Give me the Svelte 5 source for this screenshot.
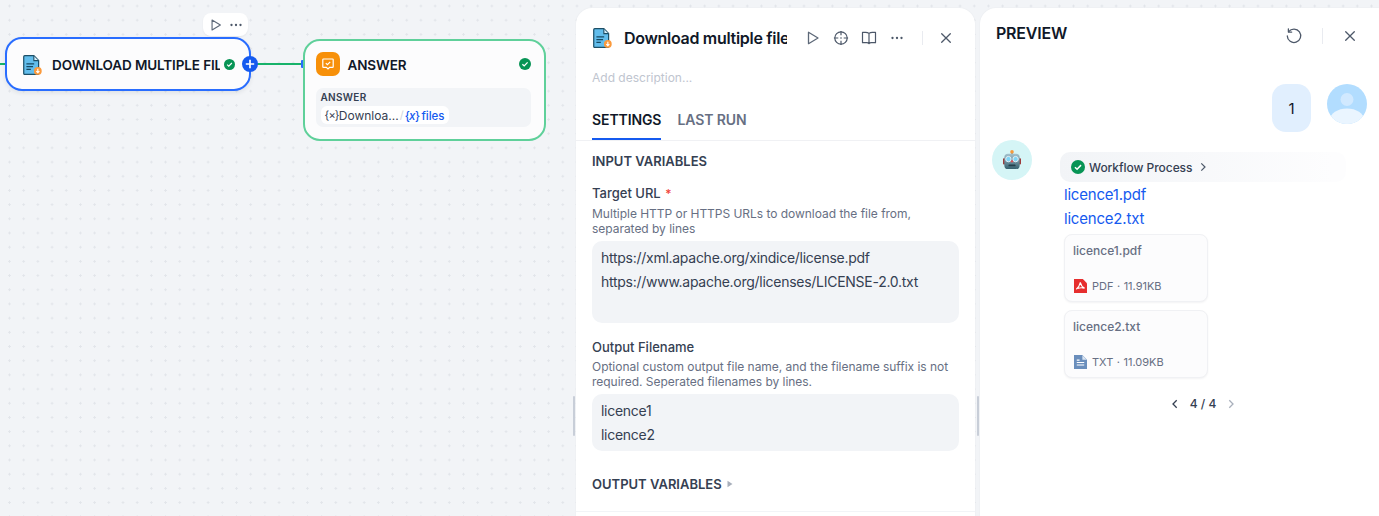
<script lang="ts">
  const urls = [
    "https://xml.apache.org/xindice/license.pdf",
    "https://www.apache.org/licenses/LICENSE-2.0.txt",
  ];
  const names = ["licence1", "licence2"];
  const links = ["licence1.pdf", "licence2.txt"];
</script>

{#snippet docIcon()}
  <svg class="doc" width="19" height="20" viewBox="2 1 17 18" aria-hidden="true">
    <path d="M3.500 1.600h8.200l4.300 4.400v11.600c0 .5-.4.900-.9.900H3.500c-.5 0-.9-.4-.9-.9V2.500c0-.5.400-.9.900-.9z" fill="#62bdec" stroke="#1d4f66" stroke-width="1.100"/>
    <path d="M11.700 1.800v4.300H16" fill="#d6eefa" stroke="#1d4f66" stroke-width="1"/>
    <path d="M5 9h7M5 11.500h6M5 14h4" stroke="#164a63" stroke-width="1.200"/>
    <circle cx="15.300" cy="15.300" r="3.500" fill="#fb9a3c"/>
    <path d="M15.300 13.300v3.400M13.900 15.500l1.400 1.400 1.400-1.400" fill="none" stroke="#fff" stroke-width="1"/>
  </svg>
{/snippet}

{#snippet check(size)}
  <svg width={size} height={size} viewBox="0 0 12 12" aria-hidden="true">
    <circle cx="6" cy="6" r="6" fill="#079455"/>
    <path d="M3.400 6.200l1.800 1.700 3.400-3.500" fill="none" stroke="#fff" stroke-width="1.300"/>
  </svg>
{/snippet}

{#snippet close()}
  <svg width="16" height="16" viewBox="0 0 16 16" aria-hidden="true">
    <path d="M3.700 3.700l8.600 8.600M12.300 3.700l-8.600 8.600" stroke="#4d5869" stroke-width="1.300" stroke-linecap="round"/>
  </svg>
{/snippet}

{#snippet play(size)}
  <svg width={size} height={size} viewBox="0 0 16 16" aria-hidden="true">
    <path d="M3.500 2.300v11.400L13 8z" fill="none" stroke="#5d6878" stroke-width="1.300" stroke-linejoin="round"/>
  </svg>
{/snippet}

{#snippet dots()}
  <svg width="16" height="16" viewBox="0 0 16 16" aria-hidden="true">
    <g fill="#4d5869"><circle cx="3.500" cy="8" r="1.150"/><circle cx="8" cy="8" r="1.150"/><circle cx="12.500" cy="8" r="1.150"/></g>
  </svg>
{/snippet}

<div class="screen">
  <section class="canvas">
    <div class="edge edge-in"></div>
    <div class="edge edge-out"></div>
    <div class="port"></div>

    <div class="node-tools">
      {@render play(14)}
      {@render dots()}
    </div>

    <div class="node node-download">
      {@render docIcon()}
      <span class="node-title clip">DOWNLOAD MULTIPLE FILES</span>
      {@render check(11)}
      <span class="add">
        <svg width="10" height="10" viewBox="0 0 10 10" aria-hidden="true"><path d="M5 .8v8.400M.8 5h8.400" stroke="#fff" stroke-width="1.700"/></svg>
      </span>
    </div>

    <div class="node node-answer">
      <div class="answer-head">
        <span class="answer-icon">
          <svg width="14" height="14" viewBox="0 0 14 14" aria-hidden="true">
            <path d="M2.500 2h9c.4 0 .7.300.7.700v7c0 .4-.3.700-.7.700H8.600L7 12 5.400 10.400H2.500c-.4 0-.7-.3-.7-.7v-7c0-.4.300-.7.700-.7z" fill="none" stroke="#fff" stroke-width="1.200"/>
            <path d="M4.800 6.100l1.600 1.500 2.800-2.800" fill="none" stroke="#fff" stroke-width="1.200"/>
          </svg>
        </span>
        <span class="node-title">ANSWER</span>
        {@render check(12)}
      </div>
      <div class="answer-body">
        <div class="answer-label">ANSWER</div>
        <div class="var-chip">
          <span class="var-x">{"{×}"}</span><span>Downloa...</span><span class="var-sep">/</span><span class="var-blue"><span class="var-brace">{"{"}<i>x</i>{"}"}</span><span class="var-name">files</span></span>
        </div>
      </div>
    </div>
  </section>

  <div class="handle"></div>

  <section class="panel">
    <header class="panel-head">
      {@render docIcon()}
      <h2 class="panel-title">Download multiple files</h2>
      <div class="head-tools">
        <span class="tool">{@render play(16)}</span>
        <span class="tool">
          <svg width="16" height="16" viewBox="0 0 16 16" aria-hidden="true">
            <circle cx="8" cy="8" r="6.200" fill="none" stroke="#4d5869" stroke-width="1.200"/>
            <path d="M8 .9v4.400M8 10.700v4.400M.9 8h4.400M10.700 8h4.400" stroke="#4d5869" stroke-width="1.200"/>
            <circle cx="8" cy="8" r=".8" fill="#4d5869"/>
          </svg>
        </span>
        <span class="tool">
          <svg width="16" height="16" viewBox="0 0 16 16" aria-hidden="true">
            <path d="M8 3.400C7 2.600 6 2.300 4.600 2.300H1.500v10.400h4.300c1 0 1.700.4 2.200 1 .5-.6 1.200-1 2.200-1h4.300V2.300h-3.100C10 2.300 9 2.600 8 3.400zM8 3.400v10.300" fill="none" stroke="#4d5869" stroke-width="1.200" stroke-linejoin="round"/>
          </svg>
        </span>
        <span class="tool">{@render dots()}</span>
        <span class="head-divider"></span>
        <span class="tool">{@render close()}</span>
      </div>
    </header>

    <p class="add-desc">Add description...</p>

    <nav class="tabs">
      <span class="tab active">SETTINGS</span>
      <span class="tab">LAST RUN</span>
    </nav>

    <div class="panel-body">
      <h3 class="section-title">INPUT VARIABLES</h3>

      <div class="field">
        <div class="field-label">Target URL <span class="req">*</span></div>
        <p class="field-desc">Multiple HTTP or HTTPS URLs to download the file from, separated by lines</p>
        <div class="input input-urls">
          {#each urls as url}
            <div>{url}</div>
          {/each}
        </div>
      </div>

      <div class="field">
        <div class="field-label">Output Filename</div>
        <p class="field-desc">Optional custom output file name, and the filename suffix is not required. Seperated filenames by lines.</p>
        <div class="input">
          {#each names as name}
            <div>{name}</div>
          {/each}
        </div>
      </div>

      <h3 class="section-title output">
        OUTPUT VARIABLES
        <svg width="6" height="8" viewBox="0 0 6 8" aria-hidden="true"><path d="M.5.800L5.500 4 .5 7.200z" fill="#a8afbb"/></svg>
      </h3>
    </div>
    <div class="panel-rule"></div>
  </section>

  <div class="handle"></div>

  <section class="preview">
    <header class="preview-head">
      <h2 class="preview-title">PREVIEW</h2>
      <div class="preview-tools">
        <svg width="18" height="18" viewBox="0 0 18 18" aria-hidden="true">
          <path d="M3.700 4.700A6.700 6.700 0 1 1 2.300 9" fill="none" stroke="#4d5869" stroke-width="1.300" stroke-linecap="round"/>
          <path d="M3.400 1.800v3.300h3.300" fill="none" stroke="#4d5869" stroke-width="1.300" stroke-linecap="round" stroke-linejoin="round"/>
        </svg>
        <span class="head-divider"></span>
        {@render close()}
      </div>
    </header>

    <div class="msg-user">
      <div class="bubble">1</div>
      <svg class="avatar" width="40" height="40" viewBox="0 0 40 40" aria-hidden="true">
        <defs><clipPath id="round"><circle cx="20" cy="20" r="20"/></clipPath></defs>
        <g clip-path="url(#round)">
          <rect width="40" height="40" fill="#b2ddff"/>
          <circle cx="20" cy="15.500" r="6.500" fill="#d1e9ff"/>
          <ellipse cx="20" cy="36" rx="17" ry="11.500" fill="#eaf5ff"/>
        </g>
      </svg>
    </div>

    <div class="msg-bot">
      <span class="bot-avatar">
        <svg width="18" height="20" viewBox="0 0 20 22" aria-hidden="true">
          <defs>
            <linearGradient id="face" x1="0" y1="0" x2="0" y2="1">
              <stop offset="0" stop-color="#a5c3cf"/>
              <stop offset="1" stop-color="#35616f"/>
            </linearGradient>
          </defs>
          <rect x="9" y="2" width="2" height="3" fill="#7d8a96"/>
          <circle cx="10" cy="2" r="2" fill="#f79a3b"/>
          <rect x="0" y="9" width="3" height="7" rx="1" fill="#9c3b3b"/>
          <rect x="17" y="9" width="3" height="7" rx="1" fill="#9c3b3b"/>
          <rect x="1.500" y="4" width="17" height="17" rx="4" fill="url(#face)"/>
          <circle cx="6" cy="10" r="3" fill="#7fd4f5" stroke="#eef5f8" stroke-width="1"/>
          <circle cx="14" cy="10" r="3" fill="#7fd4f5" stroke="#eef5f8" stroke-width="1"/>
          <path d="M10 10.500l1.600 3H8.400z" fill="#e5484d"/>
          <rect x="6" y="16" width="8" height="2" rx="1" fill="#23404c"/>
        </svg>
      </span>
      <div class="bot-content">
        <div class="process">
          {@render check(14)}
          <span>Workflow Process</span>
          <svg width="12" height="12" viewBox="0 0 12 12" aria-hidden="true"><path d="M4.300 2.300L8 6 4.300 9.700" fill="none" stroke="#4d5869" stroke-width="1.200"/></svg>
        </div>
        <div class="links">
          {#each links as link}
            <span class="link">{link}</span>
          {/each}
        </div>
        <div class="file-card">
          <span class="file-name">licence1.pdf</span>
          <div class="file-meta">
            <svg width="13" height="14" viewBox="0 0 14 15" aria-hidden="true">
              <path d="M0 0h9.500L14 4.500V15H0z" fill="#e62e2e"/>
              <path d="M6.800 3.500c-.5 2.500-2 5.500-4.300 7.500M6.800 3.500c.5 2.500 2 5 4.700 6.500M4 10.200c2-.8 4.500-1 7-.4" fill="none" stroke="#fff" stroke-width="1.200"/>
            </svg>
            <span>PDF</span><span class="dot">·</span><span>11.91KB</span>
          </div>
        </div>
        <div class="file-card">
          <span class="file-name">licence2.txt</span>
          <div class="file-meta">
            <svg width="13" height="14" viewBox="0 0 14 15" aria-hidden="true">
              <path d="M0 0h9L14 5v10H0z" fill="#6a8ebc"/>
              <path d="M9 .3v4.700h4.700" fill="#dbe6f3"/>
              <path d="M3 5.500h3M3 8h8M3 10.800h8" stroke="#fff" stroke-width="1.200"/>
            </svg>
            <span>TXT</span><span class="dot">·</span><span>11.09KB</span>
          </div>
        </div>
        <div class="pager">
          <svg width="12" height="12" viewBox="0 0 12 12" aria-hidden="true"><path d="M7.700 2.300L4 6l3.700 3.700" fill="none" stroke="#354052" stroke-width="1.300"/></svg>
          <span>4 / 4</span>
          <svg width="12" height="12" viewBox="0 0 12 12" aria-hidden="true"><path d="M4.300 2.300L8 6 4.300 9.700" fill="none" stroke="#a8afbb" stroke-width="1.300"/></svg>
        </div>
      </div>
    </div>
  </section>
</div>

<style>
  :global(body) {
    margin: 0;
    background: #f2f4f7;
    font-family: Inter, "Noto Sans", sans-serif;
    overflow: hidden;
  }
  .screen {
    display: flex;
    height: 516px;
    width: 1379px;
    overflow: hidden;
    background-color: #f2f4f7;
    background-image: radial-gradient(circle, #e2e5ea 1px, transparent 1.200px);
    background-size: 14.200px 14.200px;
    background-position: 2.400px -1.100px;
    color: #101828;
  }
  h2, h3, p { margin: 0; }

  /* free canvas: nodes sit at their own coordinates */
  .canvas {
    position: relative;
    width: 571px;
    flex: none;
  }
  .edge {
    position: absolute;
    height: 2px;
    background: #17b26a;
    top: 63px;
  }
  .edge-in { left: 0; width: 6px; }
  .edge-out { left: 250px; width: 54px; }
  .port {
    position: absolute;
    left: 301px;
    top: 60px;
    width: 3px;
    height: 8px;
    background: #296dff;
    border-radius: 1px;
  }
  .node {
    position: absolute;
    box-sizing: border-box;
    background: #fcfcfd;
  }
  .node-tools {
    position: absolute;
    left: 203px;
    top: 13px;
    width: 45px;
    height: 23px;
    box-sizing: border-box;
    padding-left: 6px;
    display: flex;
    align-items: center;
    gap: 5px;
    background: #fff;
    border-radius: 8px;
    box-shadow: 0 1px 2px rgba(16, 24, 40, 0.06);
  }
  .node-download {
    left: 5px;
    top: 37px;
    width: 246px;
    height: 54px;
    border: 2px solid #296dff;
    border-radius: 17px;
    display: flex;
    align-items: center;
    padding: 1px 0 0 16px;
    gap: 10px;
    box-shadow: 0 2px 4px rgba(16, 24, 40, 0.08);
  }
  .node-title {
    font-size: 13.500px;
    font-weight: 600;
    color: #101828;
    letter-spacing: -0.1px;
  }
  .clip {
    width: 168px;
    flex: none;
    overflow: hidden;
    white-space: nowrap;
    margin-right: -6px;
    letter-spacing: -0.12px;
  }
  .add {
    position: absolute;
    right: -9px;
    top: 17px;
    width: 16px;
    height: 16px;
    border-radius: 50%;
    background: #155aef;
    display: flex;
    align-items: center;
    justify-content: center;
  }
  .node-answer {
    left: 302.500px;
    top: 39px;
    width: 243px;
    height: 101.500px;
    border: 2px solid #5fd09a;
    border-radius: 17px;
    padding: 11px 13px 0 11px;
  }
  .answer-head {
    display: flex;
    align-items: center;
    height: 24px;
    gap: 8px;
  }
  .answer-head .node-title { flex: 1; padding-top: 1px; }
  .answer-icon {
    width: 24px;
    height: 24px;
    border-radius: 7px;
    background: #f79009;
    display: flex;
    align-items: center;
    justify-content: center;
  }
  .answer-body {
    margin-top: 12px;
    background: #f2f4f7;
    border-radius: 7px;
    height: 39px;
    padding: 3px 5px;
    box-sizing: border-box;
  }
  .answer-label {
    font-size: 10px;
    font-weight: 600;
    color: #354052;
    line-height: 12px;
    letter-spacing: 0.3px;
  }
  .var-chip {
    display: inline-flex;
    align-items: center;
    height: 18px;
    padding: 0 4px;
    background: #fff;
    border-radius: 6px;
    font-size: 12px;
    color: #354052;
    margin-top: 2px;
    white-space: nowrap;
  }
  .var-x { font-size: 11px; letter-spacing: -0.8px; }
  .var-sep { color: #d0d5dc; margin: 0 1px; font-size: 11px; }
  .var-blue { color: #155aef; font-weight: 500; }
  .var-brace { font-size: 11.500px; letter-spacing: -0.6px; }
  .var-name { margin-left: 2px; font-size: 11.500px; }

  .handle {
    width: 5px;
    flex: none;
    position: relative;
  }
  .handle::after {
    content: "";
    position: absolute;
    left: 1.500px;
    top: 396px;
    width: 2px;
    height: 40px;
    background: #c8ced8;
    border-radius: 1px;
  }

  .panel {
    width: 399px;
    flex: none;
    margin-top: 8px;
    height: 540px;
    background: #fff;
    border-radius: 16px 16px 0 0;
    box-sizing: border-box;
    box-shadow: 0 0 2px rgba(16, 24, 40, 0.05);
  }
  .panel-head {
    display: flex;
    align-items: center;
    padding: 20px 16px 0 17px;
    height: 20px;
    gap: 12px;
  }
  .panel-title {
    width: 163px;
    flex: none;
    font-size: 16px;
    font-weight: 600;
    letter-spacing: -0.3px;
    white-space: nowrap;
    overflow: hidden;
    line-height: 22px;
  }
  .head-tools {
    display: flex;
    align-items: center;
    margin-left: 6px;
    gap: 12px;
  }
  .tool {
    display: flex;
    width: 16px;
    height: 16px;
  }
  .head-divider {
    width: 1px;
    height: 14px;
    background: #e9ebf0;
    margin: 0 3px 0 5px;
  }
  .add-desc {
    margin: 21px 16px 0;
    font-size: 12px;
    line-height: 18px;
    color: #c0c5cf;
  }
  .tabs {
    display: flex;
    gap: 16px;
    margin-top: 21px;
    padding: 0 16px;
    height: 32px;
    border-bottom: 1px solid #f0f1f4;
  }
  .tab {
    font-size: 14px;
    font-weight: 600;
    color: #676f83;
    line-height: 24px;
    height: 31px;
    box-sizing: border-box;
    letter-spacing: -0.1px;
  }
  .tab.active {
    color: #101828;
    border-bottom: 2px solid #155aef;
    height: 32px;
  }
  .panel-body {
    padding: 11px 16px 0;
  }
  .section-title {
    font-size: 13px;
    font-weight: 600;
    color: #354052;
    line-height: 18px;
  }
  .section-title.output {
    margin-top: 24px;
    display: flex;
    align-items: center;
    gap: 5px;
  }
  .field { margin-top: 13px; }
  .field + .field { margin-top: 14px; }
  .field-label {
    font-size: 13px;
    font-weight: 500;
    line-height: 20px;
    color: #354052;
  }
  .req { color: #f04438; margin-left: 1px; font-size: 12px; }
  .field-desc {
    font-size: 12px;
    letter-spacing: -0.03px;
    line-height: 15px;
    color: #676f83;
    margin-top: 2px;
  }
  .input {
    margin-top: 5px;
    background: #f2f4f7;
    border-radius: 10px;
    padding: 5px 9px 4px;
    font-size: 14px;
    letter-spacing: -0.27px;
    line-height: 24px;
    color: #354052;
  }
  .input-urls { height: 82px; box-sizing: border-box; }
  .panel-rule {
    height: 1px;
    background: #f2f4f7;
    margin-top: 18px;
  }

  .preview {
    flex: 1;
    margin-top: 8px;
    background: #fff;
    border-radius: 16px 0 0 0;
    box-shadow: 0 0 2px rgba(16, 24, 40, 0.05);
  }
  .preview-head {
    display: flex;
    justify-content: space-between;
    padding: 14px 21px 0 16px;
    height: 22px;
  }
  .preview-title {
    font-size: 16px;
    font-weight: 600;
    letter-spacing: -0.2px;
    line-height: 22px;
  }
  .preview-tools {
    display: flex;
    align-items: center;
    gap: 19px;
    height: 28px;
  }
  .preview-tools .head-divider { margin: 0; height: 16px; }
  .msg-user {
    display: flex;
    justify-content: flex-end;
    gap: 16px;
    margin-top: 40px;
    padding-right: 12px;
  }
  .bubble {
    width: 39px;
    height: 48px;
    border-radius: 14px;
    background: #e1effe;
    display: flex;
    align-items: center;
    justify-content: center;
    font-size: 15px;
    color: #101828;
  }
  .avatar { display: block; }
  .msg-bot {
    display: flex;
    margin-top: 8px;
    padding-left: 12px;
    gap: 28px;
  }
  .bot-avatar {
    width: 40px;
    height: 40px;
    flex: none;
    border-radius: 50%;
    background: #d5f5f6;
    display: flex;
    align-items: center;
    justify-content: center;
  }
  .bot-content { width: 286px; padding-top: 12px; }
  .process {
    display: flex;
    align-items: center;
    gap: 4px;
    height: 30px;
    padding-left: 11px;
    box-sizing: border-box;
    border-radius: 10px;
    background: linear-gradient(90deg, #f2f4f7, #fdfdfe 95%);
    font-size: 12px;
    letter-spacing: -0.05px;
    font-weight: 500;
    color: #354052;
  }
  .process svg:last-child { margin-left: 1px; }
  .links {
    display: flex;
    flex-direction: column;
    padding-left: 4px;
    margin-top: 1px;
  }
  .link {
    font-size: 15px;
    letter-spacing: -0.2px;
    line-height: 24px;
    color: #155aef;
  }
  .file-card {
    margin: 3px 0 8px 4px;
    width: 144px;
    height: 68px;
    box-sizing: border-box;
    border: 1px solid #f0f1f4;
    border-radius: 8px;
    background: #fcfcfd;
    box-shadow: 0 1px 2px rgba(16, 24, 40, 0.05);
    padding: 8px 8px 8px;
    display: flex;
    flex-direction: column;
    justify-content: space-between;
  }
  .file-card + .file-card { margin-top: 0; }
  .file-name {
    font-size: 12px;
    font-weight: 500;
    color: #676f83;
    line-height: 16px;
  }
  .file-meta {
    display: flex;
    align-items: center;
    gap: 5px;
    font-size: 11px;
    color: #676f83;
    height: 15px;
    padding-left: 1px;
  }
  .dot { margin: 0 -1.500px; }
  .pager {
    display: flex;
    align-items: center;
    justify-content: center;
    gap: 9px;
    font-size: 12px;
    font-weight: 500;
    color: #354052;
    margin-top: 18px;
    width: 286px;
  }
</style>
